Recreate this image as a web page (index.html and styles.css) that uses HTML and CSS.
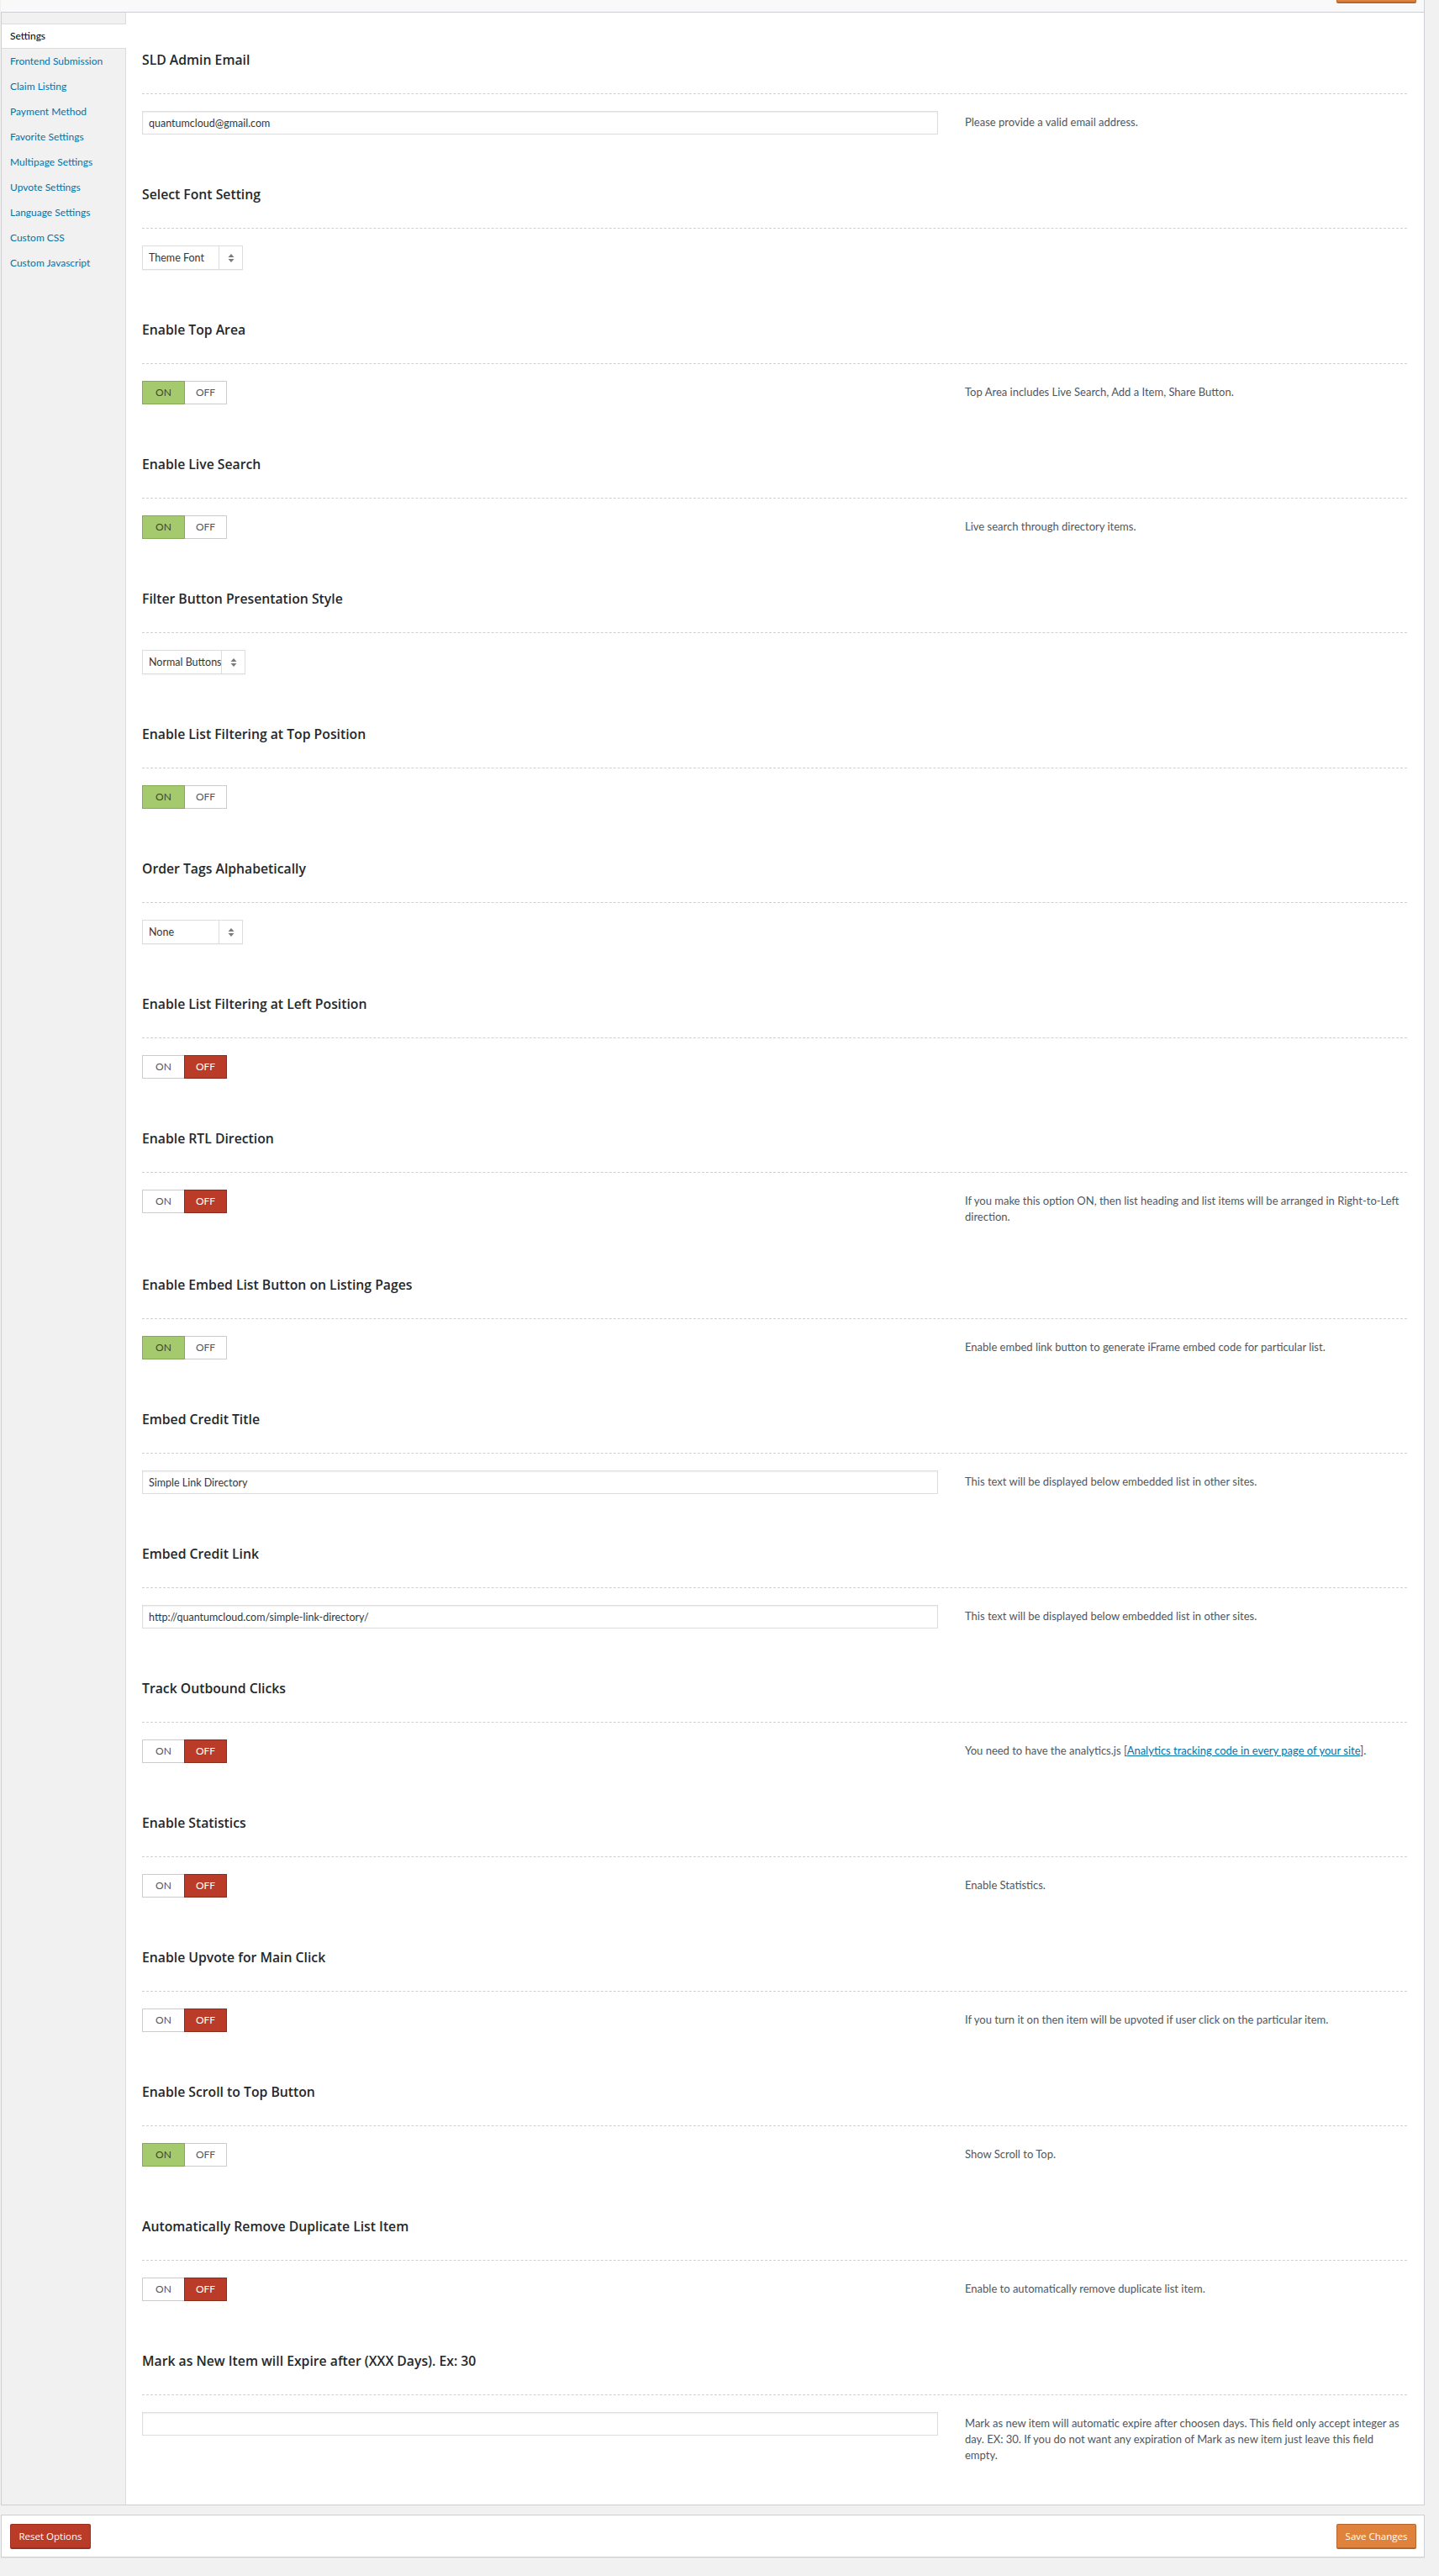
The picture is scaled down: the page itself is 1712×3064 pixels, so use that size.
FILE: index.html
```html
<!DOCTYPE html>
<html lang="en">
<head>
  <meta charset="UTF-8" />
  <meta name="viewport" content="width=device-width, initial-scale=1.0"/>
  <title>Simple Link Directory - Settings</title>

  <link rel="stylesheet" href="styles.css">
</head>
<body>

  <div class="wrap">

    <!-- header strip, only the bottom of the save button shows -->
    <div class="topbar">
      <button class="btn btn-save">Save Changes</button>
    </div>

    <div class="panel">
      <ul class="tabs">
        <li class="tab active">Settings</li>
        <li class="tab"><a href="#">Frontend Submission</a></li>
        <li class="tab"><a href="#">Claim Listing</a></li>
        <li class="tab"><a href="#">Payment Method</a></li>
        <li class="tab"><a href="#">Favorite Settings</a></li>
        <li class="tab"><a href="#">Multipage Settings</a></li>
        <li class="tab"><a href="#">Upvote Settings</a></li>
        <li class="tab"><a href="#">Language Settings</a></li>
        <li class="tab"><a href="#">Custom CSS</a></li>
        <li class="tab"><a href="#">Custom Javascript</a></li>
      </ul>

      <div class="fields">

        <div class="field">
          <h3 class="field-title">SLD Admin Email</h3>
          <div class="field-row">
            <div class="field-control"><input class="text-input" type="text" value="quantumcloud@gmail.com"></div>
            <p class="field-desc">Please provide a valid email address.</p>
          </div>
        </div>

        <div class="field">
          <h3 class="field-title">Select Font Setting</h3>
          <div class="field-row">
            <div class="field-control">
              <div class="select"><span class="select-value">Theme Font</span><span class="select-arrow"><svg width="8" height="12" viewBox="0 0 8 12"><path d="M4 1 L7.5 5 H0.5 Z M4 11 L7.5 7 H0.5 Z" fill="#7a7a7a"/></svg></span></div>
            </div>
            <p class="field-desc"></p>
          </div>
        </div>

        <div class="field">
          <h3 class="field-title">Enable Top Area</h3>
          <div class="field-row">
            <div class="field-control">
              <div class="switch is-on"><span class="switch-on">ON</span><span class="switch-off">OFF</span></div>
            </div>
            <p class="field-desc">Top Area includes Live Search, Add a Item, Share Button.</p>
          </div>
        </div>

        <div class="field">
          <h3 class="field-title">Enable Live Search</h3>
          <div class="field-row">
            <div class="field-control">
              <div class="switch is-on"><span class="switch-on">ON</span><span class="switch-off">OFF</span></div>
            </div>
            <p class="field-desc">Live search through directory items.</p>
          </div>
        </div>

        <div class="field">
          <h3 class="field-title">Filter Button Presentation Style</h3>
          <div class="field-row">
            <div class="field-control">
              <div class="select select-wide"><span class="select-value">Normal Buttons</span><span class="select-arrow"><svg width="8" height="12" viewBox="0 0 8 12"><path d="M4 1 L7.5 5 H0.5 Z M4 11 L7.5 7 H0.5 Z" fill="#7a7a7a"/></svg></span></div>
            </div>
            <p class="field-desc"></p>
          </div>
        </div>

        <div class="field">
          <h3 class="field-title">Enable List Filtering at Top Position</h3>
          <div class="field-row">
            <div class="field-control">
              <div class="switch is-on"><span class="switch-on">ON</span><span class="switch-off">OFF</span></div>
            </div>
            <p class="field-desc"></p>
          </div>
        </div>

        <div class="field">
          <h3 class="field-title">Order Tags Alphabetically</h3>
          <div class="field-row">
            <div class="field-control">
              <div class="select"><span class="select-value">None</span><span class="select-arrow"><svg width="8" height="12" viewBox="0 0 8 12"><path d="M4 1 L7.5 5 H0.5 Z M4 11 L7.5 7 H0.5 Z" fill="#7a7a7a"/></svg></span></div>
            </div>
            <p class="field-desc"></p>
          </div>
        </div>

        <div class="field">
          <h3 class="field-title">Enable List Filtering at Left Position</h3>
          <div class="field-row">
            <div class="field-control">
              <div class="switch is-off"><span class="switch-on">ON</span><span class="switch-off">OFF</span></div>
            </div>
            <p class="field-desc"></p>
          </div>
        </div>

        <div class="field">
          <h3 class="field-title">Enable RTL Direction</h3>
          <div class="field-row">
            <div class="field-control">
              <div class="switch is-off"><span class="switch-on">ON</span><span class="switch-off">OFF</span></div>
            </div>
            <p class="field-desc">If you make this option ON, then list heading and list items will be arranged in Right-to-Left direction.</p>
          </div>
        </div>

        <div class="field">
          <h3 class="field-title">Enable Embed List Button on Listing Pages</h3>
          <div class="field-row">
            <div class="field-control">
              <div class="switch is-on"><span class="switch-on">ON</span><span class="switch-off">OFF</span></div>
            </div>
            <p class="field-desc">Enable embed link button to generate iFrame embed code for particular list.</p>
          </div>
        </div>

        <div class="field">
          <h3 class="field-title">Embed Credit Title</h3>
          <div class="field-row">
            <div class="field-control"><input class="text-input" type="text" value="Simple Link Directory"></div>
            <p class="field-desc">This text will be displayed below embedded list in other sites.</p>
          </div>
        </div>

        <div class="field">
          <h3 class="field-title">Embed Credit Link</h3>
          <div class="field-row">
            <div class="field-control"><input class="text-input" type="text" value="http://quantumcloud.com/simple-link-directory/"></div>
            <p class="field-desc">This text will be displayed below embedded list in other sites.</p>
          </div>
        </div>

        <div class="field">
          <h3 class="field-title">Track Outbound Clicks</h3>
          <div class="field-row">
            <div class="field-control">
              <div class="switch is-off"><span class="switch-on">ON</span><span class="switch-off">OFF</span></div>
            </div>
            <p class="field-desc">You need to have the analytics.js [<a href="#">Analytics tracking code in every page of your site</a>].</p>
          </div>
        </div>

        <div class="field">
          <h3 class="field-title">Enable Statistics</h3>
          <div class="field-row">
            <div class="field-control">
              <div class="switch is-off"><span class="switch-on">ON</span><span class="switch-off">OFF</span></div>
            </div>
            <p class="field-desc">Enable Statistics.</p>
          </div>
        </div>

        <div class="field">
          <h3 class="field-title">Enable Upvote for Main Click</h3>
          <div class="field-row">
            <div class="field-control">
              <div class="switch is-off"><span class="switch-on">ON</span><span class="switch-off">OFF</span></div>
            </div>
            <p class="field-desc">If you turn it on then item will be upvoted if user click on the particular item.</p>
          </div>
        </div>

        <div class="field">
          <h3 class="field-title">Enable Scroll to Top Button</h3>
          <div class="field-row">
            <div class="field-control">
              <div class="switch is-on"><span class="switch-on">ON</span><span class="switch-off">OFF</span></div>
            </div>
            <p class="field-desc">Show Scroll to Top.</p>
          </div>
        </div>

        <div class="field">
          <h3 class="field-title">Automatically Remove Duplicate List Item</h3>
          <div class="field-row">
            <div class="field-control">
              <div class="switch is-off"><span class="switch-on">ON</span><span class="switch-off">OFF</span></div>
            </div>
            <p class="field-desc">Enable to automatically remove duplicate list item.</p>
          </div>
        </div>

        <div class="field">
          <h3 class="field-title">Mark as New Item will Expire after (XXX Days). Ex: 30</h3>
          <div class="field-row">
            <div class="field-control"><input class="text-input" type="text" value=""></div>
            <p class="field-desc">Mark as new item will automatic expire after choosen days. This field only accept integer as day. EX: 30. If you do not want any expiration of Mark as new item just leave this field empty.</p>
          </div>
        </div>

      </div>
    </div>

    <div class="footer">
      <button class="btn btn-reset">Reset Options</button>
      <button class="btn btn-save">Save Changes</button>
    </div>

  </div>

</body>
</html>
```

FILE: styles.css
```css
:root {
  --bg: #f1f1f1;
  --line: #ccd0d4;
  --text: #23282d;
  --muted: #50575e;
  --link: #0073aa;
  --green: #a5c96d;
  --red: #b93b28;
  --orange: #df823b;
}

* {
  box-sizing: border-box;
}

body {
  margin: 0;
  background-color: var(--bg);
  color: var(--text);
  font-family: Lato, "Open Sans", sans-serif;
  font-size: 13px;
  height: 3064px;
}

.wrap {
  margin: 0 17px 0 1px;
}

/* === header strip === */
.topbar {
  height: 15px;
  overflow: hidden;
  background-color: #f9f9f9;
  border-bottom: 1px solid var(--line);
  border-right: 1px solid var(--line);
  display: flex;
  justify-content: flex-end;
  align-items: flex-start;
  padding-right: 9px;
}

.topbar .btn {
  margin-top: -26px;
}

/* === main panel === */
.panel {
  display: flex;
  background-color: #fff;
  border: 1px solid var(--line);
  border-top: 0;
}

.tabs {
  list-style: none;
  margin: 0;
  padding: 13px 0 0;
  width: 148px;
  flex-shrink: 0;
  background-color: var(--bg);
  border-right: 1px solid #dcdcdc;
  font-size: 12px;
}

.tab {
  height: 30px;
  line-height: 30px;
  padding-left: 10px;
  white-space: nowrap;
}

.tab a {
  color: var(--link);
  text-decoration: none;
}

.tab.active {
  background-color: #fff;
  border-top: 1px solid #dcdcdc;
  border-bottom: 1px solid #dcdcdc;
  line-height: 28px;
  margin-right: -1px;
  color: #000;
}

.fields {
  flex: 1;
  padding: 16px 20px 18px 19px;
}

.field {
  padding-top: 30px;
}

.field-title {
  margin: 0;
  font-family: "Open Sans", sans-serif;
  font-size: 15.75px;
  font-weight: 600;
  line-height: 20px;
  padding-bottom: 30px;
  border-bottom: 1px dashed #d0d0d0;
}

.field-row {
  display: grid;
  grid-template-columns: 947px 1fr;
  column-gap: 32px;
  align-items: start;
  padding: 20px 0 31px;
}

.field-desc {
  margin: 0;
  padding-top: 4px;
  line-height: 19px;
  color: var(--muted);
}

.field-desc a {
  color: var(--link);
}

/* === controls === */
.text-input {
  display: block;
  width: 100%;
  height: 28px;
  margin: 0;
  padding: 0 7px;
  border: 1px solid #ddd;
  border-radius: 0;
  box-shadow: inset 0 1px 2px rgba(0, 0, 0, 0.07);
  background-color: #fff;
  color: #32373c;
  font-family: Lato, "Open Sans", sans-serif;
  font-size: 12.5px;
}

.select {
  display: flex;
  width: 120px;
  height: 29px;
  border: 1px solid #ddd;
  box-shadow: 0 1px 1px rgba(0, 0, 0, 0.04);
  background-color: #fff;
  color: #32373c;
  font-size: 12.5px;
}

.select-wide {
  width: 123px;
}

.select-value {
  flex: 1;
  line-height: 27px;
  padding-left: 7px;
  white-space: nowrap;
  overflow: hidden;
}

.select-arrow {
  width: 28px;
  border-left: 1px solid #ddd;
  display: flex;
  align-items: center;
  justify-content: center;
}

.switch {
  display: flex;
  width: 101px;
  height: 28px;
  font-size: 12px;
}

.switch span {
  flex: 1;
  text-align: center;
  line-height: 26px;
  border: 1px solid #ccc;
  background-color: #fff;
  color: #555;
}

.switch-on {
  border-right: 0 !important;
}

.switch.is-on .switch-on {
  background-color: var(--green);
  border-color: #84a855;
  border-right: 1px solid #84a855 !important;
  color: #3b4a24;
}

.switch.is-on .switch-off {
  border-left: 0;
}

.switch.is-off .switch-off {
  background-color: var(--red);
  border-color: #8e2a1b;
  color: #fff;
}

/* === footer === */
.footer {
  margin-top: 11px;
  height: 51px;
  display: flex;
  justify-content: space-between;
  align-items: center;
  padding: 0 9px 0 10px;
  background-color: #fff;
  border: 1px solid var(--line);
  box-shadow: 0 1px 1px rgba(0, 0, 0, 0.04);
}

.btn {
  height: 30px;
  padding: 0 9px;
  border: 1px solid;
  border-bottom-width: 2px;
  border-radius: 2px;
  color: #fff;
  font-family: "Open Sans", sans-serif;
  font-size: 11.5px;
  cursor: pointer;
  flex-shrink: 0;
}

.btn-reset {
  width: 96px;
  background-color: var(--red);
  border-color: #9c2f1f;
}

.btn-save {
  width: 95px;
  background-color: var(--orange);
  border-color: #b8642a;
}
```
